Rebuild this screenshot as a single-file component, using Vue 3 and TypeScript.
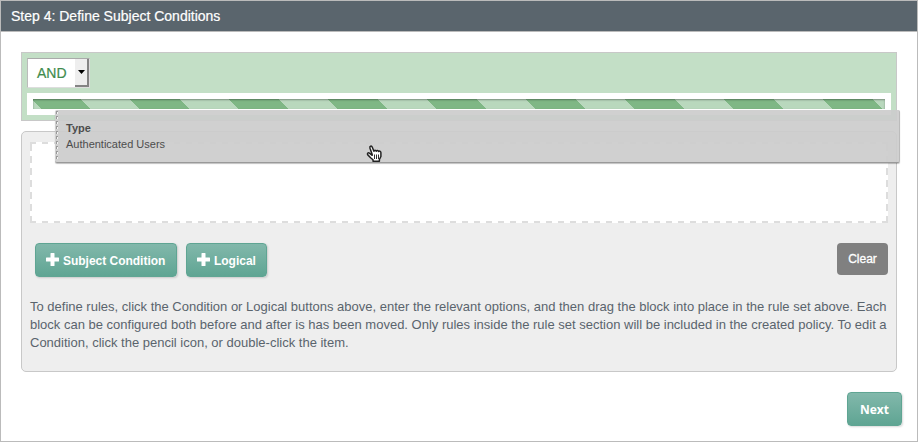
<script setup lang="ts">
import { ref } from 'vue'

const operator = ref('AND')
const dragged = { label: 'Type', value: 'Authenticated Users' }
const addButtons = [
  { label: 'Subject Condition', kind: 'subject' },
  { label: 'Logical', kind: 'logical' },
]
const help = [
  'To define rules, click the Condition or Logical buttons above, enter the relevant options, and then drag the block into place in the rule set above. Each',
  'block can be configured both before and after is has been moved. Only rules inside the rule set section will be included in the created policy. To edit a',
  'Condition, click the pencil icon, or double-click the item.',
]
</script>

<template>
  <main class="step">
    <header class="title"><span>Step 4: Define Subject Conditions</span></header>
    <section class="body">
      <div class="ruleset">
        <div class="select">
          <span class="value">{{ operator }}</span>
          <span class="arrow"><svg width="7" height="4" viewBox="0 0 7 4"><path d="M0 0h7L3.5 4z" /></svg></span>
        </div>
        <div class="slot"><div class="stripes"></div></div>
      </div>
      <div class="panel">
        <div class="dropzone"></div>
        <div class="actions">
          <button v-for="b in addButtons" :key="b.kind" class="btn" :class="b.kind">
            <svg class="plus" width="13" height="13" viewBox="0 0 13 13"><path d="M5 0h3a.5 .5 0 0 1 .5.5v4H12.500a.5.5 0 0 1 .5.5v3a.5.5 0 0 1-.5.5H8.500V12.500a.5.5 0 0 1-.5.500H5a.5.5 0 0 1-.5-.5V8.500H.5a.5.5 0 0 1-.5-.5V5a.5.5 0 0 1 .5-.5h4V.5A.5.5 0 0 1 5 0z" /></svg>
            <span>{{ b.label }}</span>
          </button>
          <button class="clear"><span>Clear</span></button>
        </div>
        <div class="help">
          <p v-for="line in help" :key="line">{{ line }}</p>
        </div>
      </div>
      <button class="btn next">Next</button>
    </section>

    <div class="dragged">
      <i class="grip"></i>
      <strong>{{ dragged.label }}</strong>
      <span>{{ dragged.value }}</span>
    </div>
    <svg class="cursor" width="17" height="20" viewBox="0 0 17 20">
      <path d="M6.200 10.500L4 4.200C3.300 2 5.500 1.300 6.300 3.300L7.900 7.300C8.100 5.900 9.900 5.900 10.300 7.300C10.600 6 12.300 6.200 12.700 7.600C13.200 6.600 14.700 7 14.900 8.500V12.500L13.400 15.500V17.300H7V15.800L4.600 13.700L1.800 10.900C.8 9.600 2 8.300 3.400 9.100L6.200 11.300z" fill="#fff" stroke="#222" stroke-width="1.500" stroke-linejoin="round" />
      <path d="M8.500 10.500v4.500M10.500 10.500v4.500M12.500 10.500v4.500" stroke="#333" stroke-width="1" fill="none" />
    </svg>
  </main>
</template>

<style>
body {
  margin: 0;
  background: #fff;
}
</style>

<style scoped>
* {
  box-sizing: border-box;
}
.step {
  position: relative;
  width: 918px;
  height: 442px;
  border: 1px solid #bbb;
  background: #fff;
  font-family: "Liberation Sans", Arial, sans-serif;
  color: #5a646d;
  overflow: hidden;
}
.title {
  height: 31px;
  padding-left: 10px;
  background: #5a656d;
  border-bottom: 1px solid #bbb;
  color: #fff;
  font-size: 14px;
  line-height: 30px;
  white-space: nowrap;
  -webkit-text-stroke: 0.200px #fff;
}
.body {
  padding: 20px 15px 0 20px;
  display: flex;
  flex-direction: column;
}
.ruleset {
  width: 876px;
  height: 69px;
  padding: 5px;
  border: 1px solid #c8c8c8;
  background: #c3dfc6;
}
.select {
  display: flex;
  width: 63px;
  height: 30px;
  border: 1px solid #bbb;
  border-top-color: #aaa;
  border-right-color: #ddd;
  border-bottom-color: #ddd;
  background: #fff;
}
.value {
  width: 47px;
  padding-left: 9px;
  color: #3f8c4d;
  font-size: 14px;
  line-height: 29px;
  -webkit-text-stroke: 0.200px #3f8c4d;
}
.arrow {
  width: 14px;
  height: 28px;
  display: flex;
  align-items: center;
  justify-content: center;
  background: #eee;
  border-right: 2px solid #848484;
  border-bottom: 2px solid #848484;
}
.slot {
  width: 864px;
  height: 22px;
  margin-top: 5px;
  padding: 6px;
  background: #fff;
}
.stripes {
  height: 10px;
  background: repeating-linear-gradient(45deg, #b9d8bd 0 5.660px, #7fb785 5.660px 40.660px, #b9d8bd 40.660px 70px);
  box-shadow: inset 0 1px 2px rgba(0, 0, 0, 0.350);
}
.panel {
  width: 876px;
  height: 241px;
  margin-top: 10px;
  padding: 10px 8px 0;
  border: 1px solid #c8c8c8;
  border-radius: 5px;
  background: #eee;
}
.dropzone {
  height: 81px;
  background:
    repeating-linear-gradient(to left, #ddd 0 6px, transparent 6px 12px) top / 100% 2px no-repeat,
    repeating-linear-gradient(to left, #ddd 0 6px, transparent 6px 12px) bottom / 100% 2px no-repeat,
    repeating-linear-gradient(to top, #ddd 0 7px, transparent 7px 12px) left / 2px 100% no-repeat,
    repeating-linear-gradient(to top, #ddd 0 7px, transparent 7px 12px) right / 2px 100% no-repeat,
    #fff;
}
.actions {
  display: flex;
  align-items: flex-start;
  gap: 9px;
  margin: 20px 0 0 5px;
}
button {
  font-family: inherit;
  margin: 0;
}
.btn {
  height: 34px;
  padding: 0;
  display: flex;
  align-items: center;
  border: 1px solid #5fa593;
  border-radius: 4px;
  background: linear-gradient(#82b8ab, #5fa593);
  box-shadow: 1px 1px 2px rgba(0, 0, 0, 0.150);
  color: #fff;
  font-size: 12px;
  font-weight: bold;
  white-space: nowrap;
}
.btn.subject,
.btn.logical {
  padding: 1px 0 0 10px;
  letter-spacing: -0.020px;
}
.btn.subject {
  width: 142px;
}
.btn.logical {
  width: 81px;
}
.plus {
  fill: #fff;
  margin: -2px 4px 0 0;
}
.arrow svg {
  fill: #000;
}
.clear {
  margin-left: auto;
  width: 51px;
  height: 32px;
  padding: 0;
  border: 0;
  border-radius: 4px;
  background: #808080;
  color: #fff;
  font-size: 12px;
  -webkit-text-stroke: 0.300px #fff;
}
.help {
  margin-top: 21px;
  font-size: 13px;
  line-height: 18px;
}
.help p {
  margin: 0;
  white-space: nowrap;
}
.btn.next {
  align-self: flex-end;
  width: 55px;
  margin-top: 20px;
  justify-content: center;
  font-family: "Open Sans", sans-serif;
  font-size: 12px;
}
.dragged {
  position: absolute;
  left: 54px;
  top: 109px;
  width: 845px;
  height: 53px;
  padding: 10px 0 0 11px;
  display: flex;
  flex-direction: column;
  background: rgba(204, 204, 204, 0.920);
  border-right: 1px solid #bbb;
  border-bottom: 1px solid #999;
  border-radius: 2px;
  box-shadow: 0 1px 1px rgba(0, 0, 0, 0.250);
  color: #4d4d4d;
  font-size: 11px;
  line-height: 16px;
}
.grip {
  position: absolute;
  left: 1px;
  top: 1px;
  width: 2px;
  height: 50px;
  background: repeating-linear-gradient(#999 0 1px, #f4f4f4 1px 3px, #d0d0d0 3px 5px);
}
.grip::before {
  content: "";
  position: absolute;
  left: 0;
  top: 0;
  width: 1px;
  height: 50px;
  background: repeating-linear-gradient(#999 0 3px, #d0d0d0 3px 5px);
}
.cursor {
  position: absolute;
  left: 365px;
  top: 143px;
}
</style>
